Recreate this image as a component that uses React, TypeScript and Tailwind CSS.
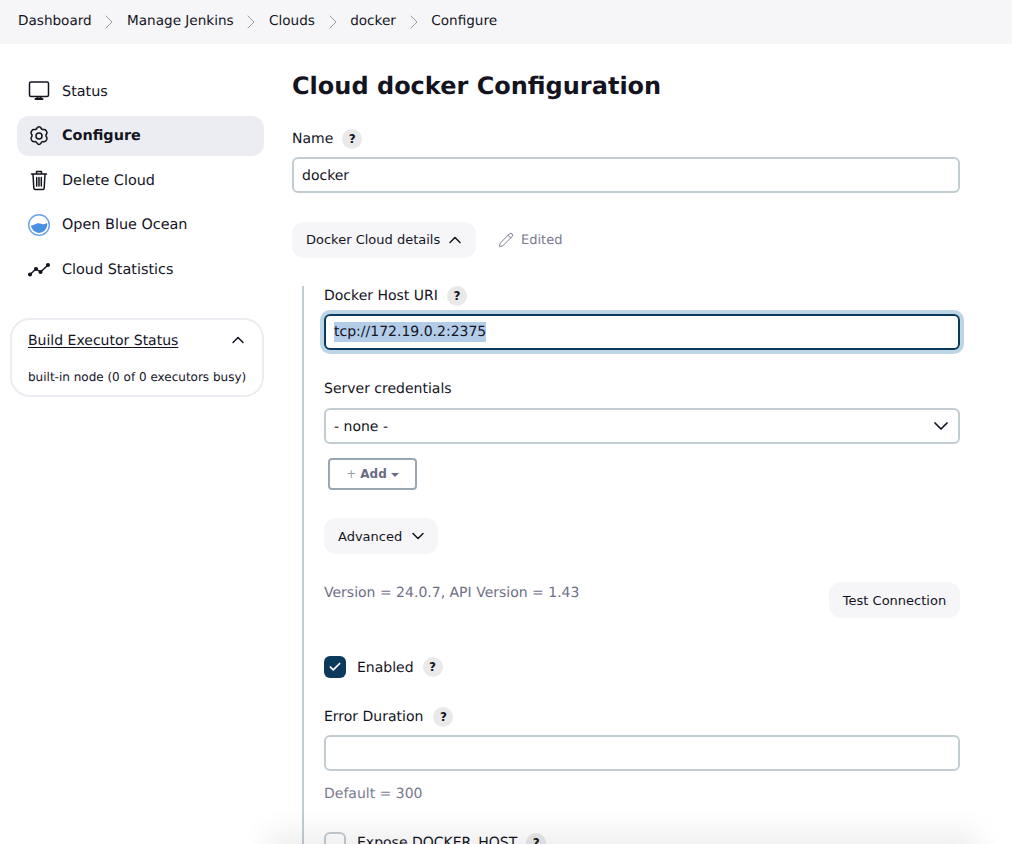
import { ChevronDown, ChevronRight, ChevronUp, Check, Pencil } from 'lucide-react';

const crumbs = ['Dashboard', 'Manage Jenkins', 'Clouds', 'docker', 'Configure'];

function Help() {
    return (
        <span className="flex h-5 w-5 items-center justify-center rounded-full bg-[#e9e9e9] text-xs font-bold text-[#14141f]">?</span>
    );
}

function MonitorIcon() {
    return (
        <svg width="24" height="24" viewBox="0 0 24 24" fill="none" stroke="#14141f" strokeWidth="1.5" strokeLinejoin="round" strokeLinecap="round">
            <rect x="2.500" y="3" width="19" height="14.500" rx="1.500" />
            <path d="M8.500 20h7M10.500 18v2M13.500 18v2" strokeWidth="2" />
        </svg>
    );
}

function GearIcon() {
    return (
        <svg width="24" height="24" viewBox="0 0 24 24" fill="none" stroke="#14141f" strokeWidth="1.5" strokeLinejoin="round">
            <path d="M12 2.700c.9 0 1.500.5 2 1.300l.6 1 1.100.6 1.200-.1c1-.1 1.700.3 2.200 1.100l.6 1c.4.800.4 1.600-.1 2.400l-.6 1v1.200l.6 1c.5.800.5 1.600.1 2.400l-.6 1c-.5.800-1.200 1.200-2.200 1.100l-1.200-.1-1.100.6-.6 1c-.5.800-1.100 1.300-2 1.300s-1.500-.5-2-1.300l-.6-1-1.100-.6-1.200.1c-1 .1-1.700-.3-2.200-1.100l-.6-1c-.4-.8-.4-1.600.1-2.400l.6-1v-1.200l-.6-1c-.5-.8-.5-1.600-.1-2.400l.6-1c.5-.8 1.200-1.200 2.200-1.100l1.200.1 1.100-.6.6-1c.5-.8 1.100-1.300 2-1.300z" />
            <circle cx="12" cy="12" r="3" />
        </svg>
    );
}

function TrashIcon() {
    return (
        <svg width="24" height="24" viewBox="0 0 24 24" fill="none" stroke="#14141f" strokeWidth="1.5" strokeLinecap="round" strokeLinejoin="round">
            <path d="M4.500 6h15M9.500 6V3.500h5V6M6 6l.8 14a1.500 1.500 0 0 0 1.500 1.500h7.400a1.500 1.500 0 0 0 1.500-1.500L18 6M9.700 9.500v8.500M12 9.500v8.500M14.300 9.500v8.500" />
        </svg>
    );
}

function OceanIcon() {
    return (
        <svg width="24" height="24" viewBox="0 0 24 24">
            <circle cx="12" cy="12" r="10.300" fill="#fff" stroke="#6ea5ea" strokeWidth="1.500" />
            <path d="M4 12.500c2.500-.2 3.800-1.300 6-2 2.800-.9 4.500 1 6.500.7 1.500-.2 2.700-.8 3.500-1.200.3 1 .3 1.800.2 2.600a8.200 8.200 0 0 1-16.300 0z" fill="#4a90e2" />
        </svg>
    );
}

function ChartIcon() {
    return (
        <svg width="24" height="24" viewBox="0 0 24 24" fill="none" stroke="#14141f" strokeWidth="1.500" strokeLinecap="round" strokeLinejoin="round">
            <path d="M3 17.500l6-5.500 4.500 3L21 8" />
            <circle cx="3" cy="17.500" r="1.300" fill="#14141f" />
            <circle cx="9" cy="12" r="1.300" fill="#14141f" />
            <circle cx="13.500" cy="15" r="1.300" fill="#14141f" />
            <circle cx="21" cy="8" r="1.300" fill="#14141f" />
        </svg>
    );
}

const tasks = [
    { label: 'Status', icon: <MonitorIcon /> },
    { label: 'Configure', icon: <GearIcon />, active: true },
    { label: 'Delete Cloud', icon: <TrashIcon /> },
    { label: 'Open Blue Ocean', icon: <OceanIcon /> },
    { label: 'Cloud Statistics', icon: <ChartIcon /> },
];

export default function App() {
    return (
        <div className="relative h-[844px] overflow-hidden bg-white font-['DejaVu_Sans',sans-serif] text-sm text-[#14141f] [text-rendering:geometricPrecision]">
            {/* breadcrumbs */}
            <div className="flex h-11 items-center bg-[#f6f6f8] pl-[18px] text-[13.6px]">
                {crumbs.map((crumb, i) => (
                    <div key={crumb} className="flex items-center">
                        {i > 0 && <ChevronRight size={24} strokeWidth={1} className="mx-[5.650px] text-[#9a9aa6]" />}
                        <span>{crumb}</span>
                    </div>
                ))}
            </div>

            <div className="flex">
                {/* side panel */}
                <aside className="ml-[10px] mr-[28px] w-[254px] shrink-0 pt-[27px]">
                    <div className="ml-[7px] flex w-[247px] flex-col gap-1 text-[14.400px]">
                        {tasks.map(task => (
                            <div
                                key={task.label}
                                className={`flex h-[40.500px] items-center gap-[11px] rounded-xl pl-[10px] ${task.active ? 'bg-[#ecedf2] font-bold' : ''}`}
                            >
                                {task.icon}
                                <span className="pt-[2px]">{task.label}</span>
                            </div>
                        ))}
                    </div>

                    <div className="mt-[28px] h-[79px] rounded-[20px] border-2 border-[#ecedf2] pl-4 pr-[14px] pt-[11px]">
                        <div className="flex items-center justify-between">
                            <span className="underline underline-offset-2">Build Executor Status</span>
                            <ChevronUp size={20} strokeWidth={1.800} className="-mt-[1px]" />
                        </div>
                        <p className="mt-[18px] whitespace-nowrap text-xs">built-in node (0 of 0 executors busy)</p>
                    </div>
                </aside>

                {/* main form */}
                <main className="w-[668px] pt-[26px]">
                    <h1 className="text-2xl leading-[32px] font-bold">Cloud docker Configuration</h1>

                    <div className="mt-[27px] flex items-center gap-[9px]">
                        <label>Name</label>
                        <Help />
                    </div>
                    <div className="mt-[8px] flex h-9 items-center rounded-md border-2 border-[#c3ccd1] pl-2">
                        <span className="pt-[2px]">docker</span>
                    </div>

                    <div className="mt-[29px] flex items-center">
                        <button className="flex h-9 w-[184px] items-center gap-[5px] rounded-xl bg-[#f6f6f8] pl-[14px] text-[13px]">
                            Docker Cloud details
                            <ChevronUp size={20} strokeWidth={1.800} />
                        </button>
                        <div className="ml-[22px] flex items-center gap-[7px] text-[13px] text-[#7a7a90]">
                            <Pencil size={16} strokeWidth={1.500} />
                            <span className="pt-[2px]">Edited</span>
                        </div>
                    </div>

                    <div className="ml-[10px] mt-[28px] border-l-2 border-[#c3ccd1] pl-[20px] pb-10">
                        <div className="flex items-center gap-[9px]">
                            <label>Docker Host URI</label>
                            <Help />
                        </div>
                        <div className="mt-[8px] flex h-9 items-center rounded-md border-2 border-[#0b3a5c] pl-2 shadow-[0_0_0_4px_#bcd6e6]">
                            <span className="bg-[#b3cde8]">tcp://172.19.0.2:2375</span>
                        </div>

                        <label className="mt-[29px] block">Server credentials</label>
                        <div className="mt-[9px] flex h-9 items-center justify-between rounded-md border-2 border-[#c3ccd1] pl-2 pr-[5px]">
                            <span className="pt-[1px]">- none -</span>
                            <ChevronDown size={24} strokeWidth={1.700} />
                        </div>

                        <button className="ml-1 mt-[14px] flex h-8 w-[89px] items-center justify-center gap-1 rounded-[4px] border-2 border-[#9aa7b2] text-xs font-bold text-[#6b6b85]">
                            <span className="font-normal text-[#9a9aa6]">+</span>
                            Add
                            <span className="mt-[1px] h-0 w-0 border-x-[4px] border-t-[4px] border-x-transparent border-t-[#6b6b85]" />
                        </button>

                        <button className="mt-[28px] flex h-9 w-[114px] items-center gap-[6px] rounded-xl bg-[#f6f6f8] pl-[14px] text-[13px]">
                            <span className="pt-[2px]">Advanced</span>
                            <ChevronDown size={20} strokeWidth={1.800} />
                        </button>

                        <div className="mt-[19px] flex items-start justify-between">
                            <span className="mt-[10px] text-[#6f6f87]">Version = 24.0.7, API Version = 1.43</span>
                            <button className="mt-[9px] h-9 w-[131px] rounded-xl bg-[#f6f6f8] pt-[2px] text-[13px]">Test Connection</button>
                        </div>

                        <div className="mt-[38px] flex items-center">
                            <span className="flex h-[22px] w-[22px] items-center justify-center rounded-md bg-[#0b3a5c] text-white">
                                <Check size={14} strokeWidth={3} />
                            </span>
                            <span className="ml-[11px] pt-[2px]">Enabled</span>
                            <span className="ml-[9px]"><Help /></span>
                        </div>

                        <div className="mt-[29px] flex items-center gap-[10px]">
                            <label>Error Duration</label>
                            <Help />
                        </div>
                        <div className="mt-[8px] h-9 rounded-md border-2 border-[#c3ccd1]" />
                        <p className="mt-[13px] text-[#7a7a90]">Default = 300</p>

                        <div className="mt-[28px] flex items-center">
                            <span className="h-[22px] w-[22px] rounded-md border-2 border-[#c3ccd1]" />
                            <span className="ml-[11px]">Expose DOCKER_HOST</span>
                            <span className="ml-[9px]"><Help /></span>
                        </div>
                    </div>
                </main>
            </div>

            {/* shadow from the sticky bottom bar */}
            <div className="absolute bottom-[-24px] left-[280px] h-6 w-[686px] shadow-[0_0_30px_12px_rgba(0,0,0,0.07)]" />
        </div>
    );
}
